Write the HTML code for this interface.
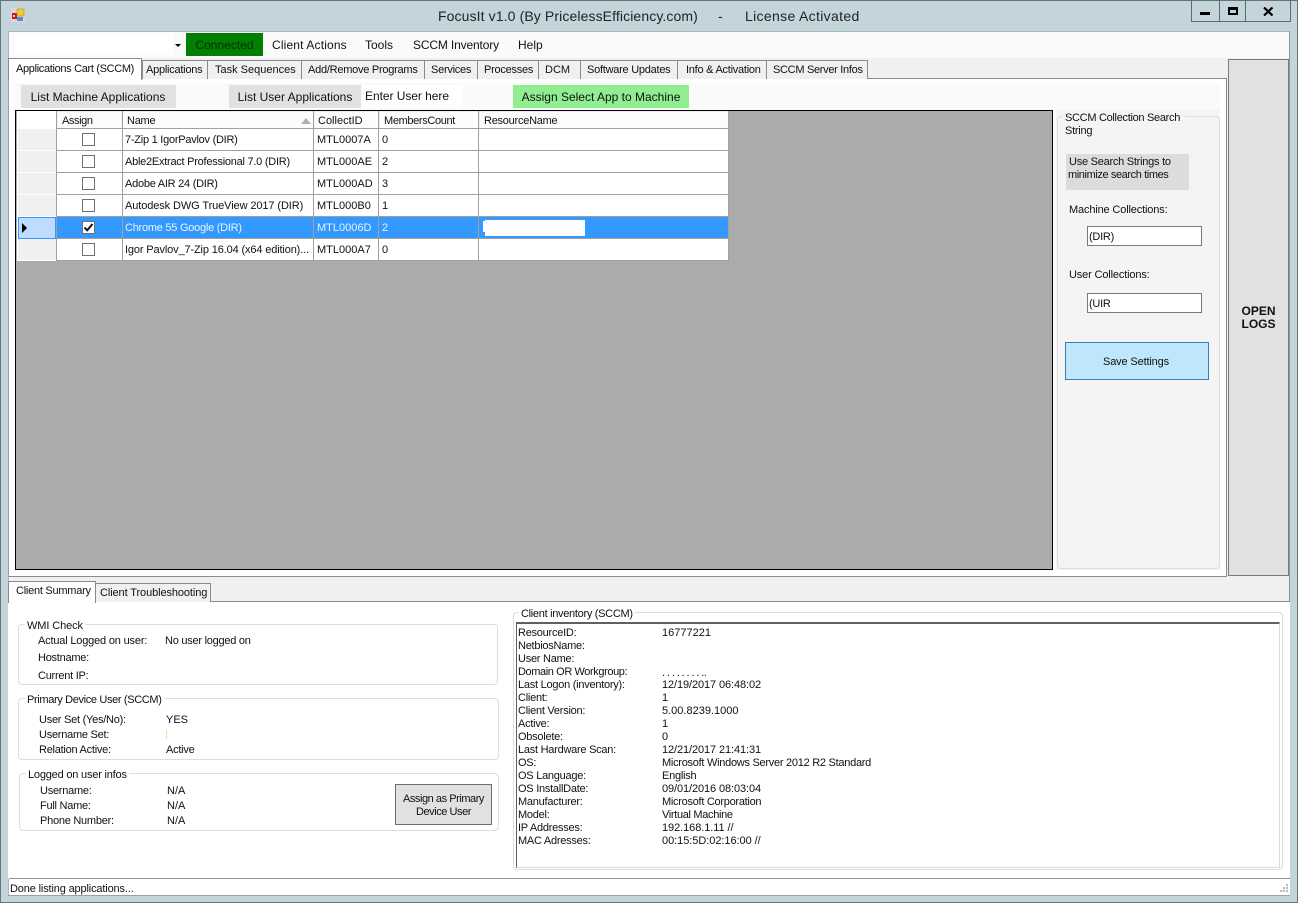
<!DOCTYPE html>
<html><head><meta charset="utf-8"><style>
html,body{margin:0;padding:0;width:1298px;height:903px;overflow:hidden;background:#c3d5da}
body{position:relative;font:11px/14px "Liberation Sans",sans-serif;color:#111;letter-spacing:-.25px}
div{position:absolute;box-sizing:border-box}
.t{white-space:nowrap}
.n{letter-spacing:0}
.tab{background:#f0f0f0;border:1px solid #8a8a94;border-bottom:none;height:19px;top:60px;line-height:18px;padding-left:4px;white-space:nowrap}
.btn{background:#e1e1e1;text-align:center;line-height:25px;top:85px;height:23px;font-size:12px;letter-spacing:0}
.m{font-size:12px;letter-spacing:0;top:38px}
.h{top:112px;height:16px;background:#fcfcfc;line-height:18px;padding-left:5px}
.cb{width:13px;height:13px;left:82px;background:#fff;border:1px solid #707070}
.g{border:1px solid #d5dfe5;border-radius:4px}
.lg{background:#fff;padding:0 2px;white-space:nowrap}
.hl{background:#a0a0a0;height:1px;left:56px;width:673px}
.vl{background:#a0a0a0;width:1px;top:111px;height:150px}
.rh{left:18px;width:38px;height:21px;background:#f0f0f0}
</style></head><body>
<div style="left:0;top:0;width:1298px;height:903px;border:1px solid #69757c"></div>

<svg style="position:absolute;left:11px;top:8px" width="14" height="14"><rect x="0" y="0" width="14" height="14" fill="#d8d8d8"/><rect x="1" y="5" width="5" height="6" fill="#c81818"/><rect x="2" y="7" width="2" height="2" fill="#f8d0d0"/><rect x="6" y="1" width="7" height="7" fill="#f5c83c" stroke="#a88a20" stroke-width=".6"/><rect x="6" y="9" width="6" height="4" fill="#5a8ae0"/></svg>
<div class="t" style="left:438px;top:7px;font-size:14px;line-height:18px;color:#222;letter-spacing:.11px">FocusIt v1.0 (By PricelessEfficiency.com)</div>
<div class="t" style="left:718px;top:7px;font-size:14px;line-height:18px;color:#222;letter-spacing:0">-</div>
<div class="t" style="left:745px;top:7px;font-size:14px;line-height:18px;color:#222;letter-spacing:.33px">License Activated</div>

<div style="left:1191px;top:0;width:100px;height:22px;border:1px solid #5f6b72;border-top:none"></div>
<div style="left:1219px;top:0;width:1px;height:21px;background:#5f6b72"></div>
<div style="left:1245px;top:0;width:1px;height:21px;background:#5f6b72"></div>
<div style="left:1200px;top:12px;width:10px;height:3px;background:#000"></div>
<div style="left:1228px;top:7px;width:10px;height:8px;border:2px solid #000;border-top-width:3px"></div>
<svg style="position:absolute;left:1263px;top:7px" width="11" height="9"><path d="M1 0.5L9.5 8.5M9.5 0.5L1 8.5" stroke="#000" stroke-width="2.2" fill="none"/></svg>

<!-- client area -->
<div style="left:8px;top:31px;width:1282px;height:865px;background:#f0f0f0;border:1px solid #a9b6bb;border-right-color:#8a9499;border-bottom-color:#7a848a"></div>
<div style="left:9px;top:32px;width:1280px;height:26px;background:#fafafa"></div>
<div style="left:15px;top:33px;width:158px;height:22px;background:#fff"></div>
<div style="left:175px;top:44px;border:3px solid transparent;border-top:3px solid #000;border-bottom:none;width:0;height:0"></div>
<div class="t" style="left:186px;top:33px;width:77px;height:23px;background:#008000;text-align:center;line-height:25px;font-size:12px;letter-spacing:0;color:#0c2c0c">Connected</div>
<div class="t m" style="left:272px;letter-spacing:.15px">Client Actions</div>
<div class="t m" style="left:365px">Tools</div>
<div class="t m" style="left:413px;letter-spacing:-.15px">SCCM Inventory</div>
<div class="t m" style="left:518px">Help</div>

<!-- top tab panel -->
<div style="left:8px;top:78px;width:1219px;height:499px;background:#fff;border:1px solid #8a8a94;border-left-color:#a0a0a8"></div>
<div style="left:15px;top:83px;width:1205px;height:487px;background:#fafafa"></div>
<div class="tab" style="left:142px;width:66px;padding-left:3px">Applications</div>
<div class="tab" style="left:207px;width:95px;padding-left:7px;letter-spacing:0">Task Sequences</div>
<div class="tab" style="left:301px;width:124px;padding-left:6px">Add/Remove Programs</div>
<div class="tab" style="left:424px;width:54px;padding-left:6px">Services</div>
<div class="tab" style="left:477px;width:62px;padding-left:6px">Processes</div>
<div class="tab" style="left:538px;width:43px;padding-left:6px;letter-spacing:0">DCM</div>
<div class="tab" style="left:580px;width:98px;padding-left:6px">Software Updates</div>
<div class="tab" style="left:677px;width:90px;padding-left:8px">Info &amp; Activation</div>
<div class="tab" style="left:766px;width:102px;padding-left:6px;letter-spacing:-.3px">SCCM Server Infos</div>
<div style="left:8px;top:58px;width:134px;height:22px;background:#fff;border:1px solid #8a8a94;border-bottom:none;padding-left:7px;line-height:20px;white-space:nowrap;letter-spacing:-.33px">Applications Cart (SCCM)</div>

<div class="btn" style="left:21px;width:155px;text-indent:-1px">List Machine Applications</div>
<div class="btn" style="left:229px;width:132px">List User Applications</div>
<div style="left:362px;top:85px;width:100px;height:23px;background:#fff;padding-left:3px;line-height:22px;font-size:12px;letter-spacing:-.05px">Enter User here</div>
<div class="btn" style="left:513px;width:176px;background:#90ee90">Assign Select App to Machine</div>

<!-- grid -->
<div style="left:15px;top:110px;width:1038px;height:460px;background:#ababab;border:1px solid #000"></div>
<div style="left:17px;top:111px;width:712px;height:150px;background:#fff"></div>
<div style="left:57px;top:111px;width:672px;height:18px;background:#f0f0f0"></div>
<div class="h" style="left:58px;width:63px;letter-spacing:-.4px;padding-left:4px">Assign</div>
<div class="h" style="left:123px;width:190px;padding-left:4px">Name</div>
<div class="h n" style="left:315px;width:63px;padding-left:3px">CollectID</div>
<div class="h" style="left:380px;width:98px;padding-left:4px;letter-spacing:-.35px">MembersCount</div>
<div class="h" style="left:480px;width:248px;padding-left:4px">ResourceName</div>
<div style="left:301px;top:118px;width:0;height:0;border:5px solid transparent;border-top:none;border-bottom:6px solid #b0b0b0"></div>

<div class="rh" style="top:129px"></div><div class="rh" style="top:151px"></div><div class="rh" style="top:173px"></div><div class="rh" style="top:195px"></div><div class="rh" style="top:239px"></div>
<div style="left:18px;top:217px;width:38px;height:22px;background:#bfdcff;border:1px solid #3399ff"></div>
<div style="left:22px;top:223px;width:0;height:0;border:5px solid transparent;border-left:5px solid #000;border-right:none"></div>
<div style="left:57px;top:217px;width:672px;height:21px;background:#3399ff"></div>

<div class="hl" style="top:128px"></div><div class="hl" style="top:150px"></div><div class="hl" style="top:172px"></div><div class="hl" style="top:194px"></div><div class="hl" style="top:216px"></div><div class="hl" style="top:238px"></div><div class="hl" style="top:260px"></div>
<div class="vl" style="left:56px"></div><div class="vl" style="left:122px"></div><div class="vl" style="left:313px"></div><div class="vl" style="left:378px"></div><div class="vl" style="left:478px"></div><div class="vl" style="left:728px"></div>

<div class="cb" style="top:133px"></div><div class="cb" style="top:155px"></div><div class="cb" style="top:177px"></div><div class="cb" style="top:199px"></div><div class="cb" style="top:221px"></div><div class="cb" style="top:243px"></div>
<svg style="position:absolute;left:83px;top:222px" width="11" height="11"><path d="M1.5 5.5L4.2 8.3L9.5 2" stroke="#111" stroke-width="2" fill="none"/></svg>

<div class="t" style="left:125px;top:133px">7-Zip 1 IgorPavlov (DIR)</div><div class="t n" style="left:317px;top:133px">MTL0007A</div><div class="t n" style="left:382px;top:133px">0</div>
<div class="t" style="left:125px;top:155px">Able2Extract Professional 7.0 (DIR)</div><div class="t n" style="left:317px;top:155px">MTL000AE</div><div class="t n" style="left:382px;top:155px">2</div>
<div class="t" style="left:125px;top:177px">Adobe AIR 24 (DIR)</div><div class="t n" style="left:317px;top:177px">MTL000AD</div><div class="t n" style="left:382px;top:177px">3</div>
<div class="t" style="left:125px;top:199px;letter-spacing:-.1px">Autodesk DWG TrueView 2017 (DIR)</div><div class="t n" style="left:317px;top:199px">MTL000B0</div><div class="t n" style="left:382px;top:199px">1</div>
<div class="t" style="left:125px;top:221px;color:#e8f2ff">Chrome 55 Google (DIR)</div><div class="t n" style="left:317px;top:221px;color:#e8f2ff">MTL0006D</div><div class="t n" style="left:382px;top:221px;color:#e8f2ff">2</div>
<div class="t" style="left:125px;top:243px;letter-spacing:-.14px">Igor Pavlov_7-Zip 16.04 (x64 edition)...</div><div class="t n" style="left:317px;top:243px">MTL000A7</div><div class="t n" style="left:382px;top:243px">0</div>
<div style="left:485px;top:220px;width:100px;height:16px;background:#fff"></div>
<div style="left:483px;top:221px;width:2px;height:11px;background:#fff"></div>

<!-- right group -->
<div style="left:1056px;top:110px;width:164px;height:460px;background:#f4f4f4"></div>
<div class="g" style="left:1057px;top:116px;width:163px;height:453px"></div>
<div class="t" style="left:1063px;top:111px;background:#f4f4f4;padding:0 2px;width:122px;height:13px;white-space:nowrap;letter-spacing:-.3px">SCCM Collection Search</div>
<div class="t" style="left:1065px;top:124px">String</div>
<div style="left:1066px;top:154px;width:123px;height:36px;background:#dcdcdc"></div>
<div class="t" style="left:1069px;top:155px">Use Search Strings to</div>
<div class="t" style="left:1068px;top:168px;letter-spacing:-.4px">minimize search times</div>
<div class="t" style="left:1069px;top:203px;letter-spacing:-.15px">Machine Collections:</div>
<div style="left:1087px;top:226px;width:115px;height:20px;background:#fff;border:1px solid #7a7a7a;padding-left:1px;line-height:20px">(DIR)</div>
<div class="t" style="left:1069px;top:268px;letter-spacing:-.15px">User Collections:</div>
<div style="left:1087px;top:293px;width:115px;height:20px;background:#fff;border:1px solid #7a7a7a;padding-left:1px;line-height:20px">(UIR</div>
<div style="left:1065px;top:342px;width:144px;height:38px;background:#bee6fd;border:1px solid #3c7fb1;text-align:center;line-height:39px;letter-spacing:-.15px;text-indent:-2px">Save Settings</div>

<!-- open logs -->
<div style="left:1228px;top:59px;width:61px;height:517px;background:#e1e1e1;border:1px solid #7a7a7a"></div>
<div style="left:1229px;top:305px;width:59px;text-align:center;font-weight:bold;font-size:12px;line-height:13px;color:#111;letter-spacing:0">OPEN<br>LOGS</div>

<!-- bottom tabs -->
<div style="left:8px;top:601px;width:1282px;height:278px;background:#fff;border-top:1px solid #8a8a94"></div>
<div class="tab" style="left:95px;top:583px;width:116px;height:19px;line-height:19px;letter-spacing:-.1px">Client Troubleshooting</div>
<div style="left:8px;top:581px;width:88px;height:22px;background:#fff;border:1px solid #8a8a94;border-bottom:none;padding-left:7px;line-height:19px;white-space:nowrap">Client Summary</div>

<!-- WMI -->
<div class="g" style="left:18px;top:624px;width:480px;height:61px"></div>
<div class="lg" style="left:25px;top:619px;height:14px;letter-spacing:-.1px">WMI Check</div>
<div class="t" style="left:38px;top:634px;letter-spacing:-.18px">Actual Logged on user:</div><div class="t" style="left:165px;top:634px">No user logged on</div>
<div class="t" style="left:38px;top:651px">Hostname:</div>
<div class="t" style="left:38px;top:669px">Current IP:</div>

<!-- Primary -->
<div class="g" style="left:18px;top:698px;width:481px;height:62px"></div>
<div class="lg" style="left:25px;top:693px;height:14px;letter-spacing:-.35px">Primary Device User (SCCM)</div>
<div class="t" style="left:39px;top:713px">User Set (Yes/No):</div><div class="t n" style="left:166px;top:713px">YES</div>
<div class="t" style="left:39px;top:728px">Username Set:</div><div style="left:166px;top:730px;width:1px;height:9px;background:#ffd58a"></div>
<div class="t" style="left:39px;top:743px">Relation Active:</div><div class="t" style="left:166px;top:743px">Active</div>

<!-- Logged -->
<div class="g" style="left:19px;top:773px;width:480px;height:58px"></div>
<div class="lg" style="left:26px;top:768px;height:14px;letter-spacing:-.2px">Logged on user infos</div>
<div class="t" style="left:40px;top:784px">Username:</div><div class="t n" style="left:167px;top:784px">N/A</div>
<div class="t" style="left:40px;top:799px">Full Name:</div><div class="t n" style="left:167px;top:799px">N/A</div>
<div class="t" style="left:40px;top:814px">Phone Number:</div><div class="t n" style="left:167px;top:814px">N/A</div>
<div style="left:395px;top:784px;width:97px;height:41px;background:#e1e1e1;border:1px solid #6e6e6e;text-align:center;line-height:13px;padding-top:8px;letter-spacing:-.45px">Assign as Primary<br>Device User</div>

<!-- Inventory -->
<div class="g" style="left:513px;top:612px;width:770px;height:258px"></div>
<div class="lg" style="left:519px;top:607px;height:14px;letter-spacing:-.3px">Client inventory (SCCM)</div>
<div style="left:516px;top:622px;width:764px;height:246px;background:#fff;border:1px solid #d8dde0;border-top:2px solid #606060;border-left:1px solid #606060"></div>
<div class="t" style="left:518px;top:626px">ResourceID:</div><div class="t n" style="left:662px;top:626px">16777221</div>
<div class="t" style="left:518px;top:639px">NetbiosName:</div>
<div class="t" style="left:518px;top:652px">User Name:</div>
<div class="t" style="left:518px;top:665px;letter-spacing:-.4px">Domain OR Workgroup:</div><div class="t" style="left:662px;top:666px;letter-spacing:-.6px">. . . . . . . . ..</div>
<div class="t" style="left:518px;top:678px">Last Logon (inventory):</div><div class="t" style="left:662px;top:678px;letter-spacing:-.1px">12/19/2017 06:48:02</div>
<div class="t" style="left:518px;top:691px">Client:</div><div class="t n" style="left:662px;top:691px">1</div>
<div class="t" style="left:518px;top:704px">Client Version:</div><div class="t n" style="left:662px;top:704px">5.00.8239.1000</div>
<div class="t" style="left:518px;top:717px">Active:</div><div class="t n" style="left:662px;top:717px">1</div>
<div class="t" style="left:518px;top:730px">Obsolete:</div><div class="t n" style="left:662px;top:730px">0</div>
<div class="t" style="left:518px;top:743px">Last Hardware Scan:</div><div class="t" style="left:662px;top:743px;letter-spacing:-.1px">12/21/2017 21:41:31</div>
<div class="t" style="left:518px;top:756px">OS:</div><div class="t" style="left:662px;top:756px;letter-spacing:-.27px">Microsoft Windows Server 2012 R2 Standard</div>
<div class="t" style="left:518px;top:769px">OS Language:</div><div class="t" style="left:662px;top:769px">English</div>
<div class="t" style="left:518px;top:782px">OS InstallDate:</div><div class="t" style="left:662px;top:782px;letter-spacing:-.1px">09/01/2016 08:03:04</div>
<div class="t" style="left:518px;top:795px">Manufacturer:</div><div class="t" style="left:662px;top:795px;letter-spacing:-.28px">Microsoft Corporation</div>
<div class="t" style="left:518px;top:808px">Model:</div><div class="t" style="left:662px;top:808px;letter-spacing:-.33px">Virtual Machine</div>
<div class="t" style="left:518px;top:821px">IP Addresses:</div><div class="t" style="left:662px;top:821px;letter-spacing:-.07px">192.168.1.11 //</div>
<div class="t" style="left:518px;top:834px">MAC Adresses:</div><div class="t" style="left:662px;top:834px;letter-spacing:-.05px">00:15:5D:02:16:00 //</div>

<!-- status -->
<div style="left:9px;top:878px;width:1281px;height:18px;background:#fff;border-top:1px solid #8f8f8f;border-bottom:1px solid #a0a0a0;padding-left:1px;line-height:20px;letter-spacing:-.15px">Done listing applications...</div>
<svg style="position:absolute;left:1280px;top:884px" width="9" height="9" fill="#b8b8b8"><rect x="6" y="0" width="2" height="2"/><rect x="3" y="3" width="2" height="2"/><rect x="6" y="3" width="2" height="2"/><rect x="0" y="6" width="2" height="2"/><rect x="3" y="6" width="2" height="2"/><rect x="6" y="6" width="2" height="2"/></svg>
</body></html>
